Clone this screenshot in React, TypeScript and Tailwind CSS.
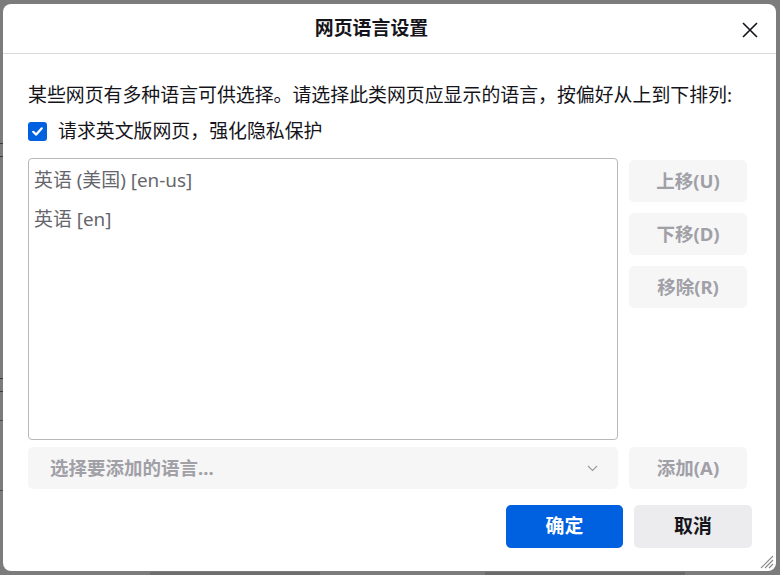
import React from "react";

const font = { fontFamily: '"Noto Sans", "Noto Sans CJK SC", sans-serif' };

function SideButton({ children, className = "" }: { children: React.ReactNode; className?: string }) {
  return (
    <div
      className={
        "flex h-[42px] w-[118px] items-center justify-center rounded-[5px] bg-[#f6f6f7] text-[18.5px] font-bold text-[#a0a0a6] " +
        className
      }
    >
      {children}
    </div>
  );
}

export default function App() {
  return (
    <div className="relative h-[575px] w-[780px] overflow-hidden bg-[#7c7c7c]" style={font}>
      {/* underlying page fragments at left edge */}
      <div className="absolute left-0 top-[420px] h-px w-[3px] bg-[#4a4a4a]" />
      <div className="absolute left-0 top-[490px] h-px w-[3px] bg-[#4a4a4a]" />
      <div className="absolute left-0 top-[143px] h-[14px] w-[3px] border-y border-[#3a3a3a]" />
      <div className="absolute left-0 top-[378px] h-[14px] w-[3px] border-y border-[#3a3a3a]" />
      <div className="absolute bottom-0 left-[150px] h-[3px] w-[170px] bg-[#6e6e6e]" />
      <div className="absolute bottom-0 left-[485px] h-[3px] w-[200px] bg-[#6a6a6a]" />

      <div className="relative ml-[3px] mt-[4px] flex h-[567px] w-[773px] flex-col rounded-[8px] bg-white">
        {/* header */}
        <div className="relative flex h-[50px] shrink-0 items-center justify-center border-b border-[#dcdcdc] pr-[36px]">
          <div className="text-[18.9px] font-bold leading-none text-[#15141a]">网页语言设置</div>
          <svg
            className="absolute right-[17px] top-[17px]"
            width="18"
            height="18"
            viewBox="0 0 18 18"
            fill="none"
            stroke="#15141a"
            strokeWidth="1.6"
          >
            <path d="M2 2 L16 16 M16 2 L2 16" />
          </svg>
        </div>

        {/* body */}
        <div className="flex flex-1 flex-col pl-[25px] pr-[24px] pt-[28px]">
          <div className="whitespace-nowrap text-[18.9px] leading-[26px] text-[#15141a]">
            某些网页有多种语言可供选择。请选择此类网页应显示的语言，按偏好从上到下排列:
          </div>

          <div className="mt-[10px] flex items-center gap-[11px]">
            <div className="flex h-[19px] w-[19px] items-center justify-center rounded-[3px] bg-[#0061e0]">
              <svg width="13" height="13" viewBox="0 0 13 13" fill="none" stroke="white" strokeWidth="2.2" strokeLinecap="round" strokeLinejoin="round">
                <path d="M2.2 6.8 L5.2 9.6 L10.8 3.3" />
              </svg>
            </div>
            <div className="text-[18.9px] leading-[26px] text-[#15141a]">请求英文版网页，强化隐私保护</div>
          </div>

          <div className="mt-[14px] flex gap-[11px]">
            <div className="h-[282px] w-[590px] rounded-[4px] border border-[#b8b8bc] px-[5px] pt-[8px]">
              <div className="text-[18.9px] leading-[26px] text-[#66666c]">英语 (美国) [en-us]</div>
              <div className="mt-[13px] text-[18.9px] leading-[26px] text-[#66666c]">英语 [en]</div>
            </div>
            <div className="flex flex-col gap-[11px] pt-[2px]">
              <SideButton>上移(U)</SideButton>
              <SideButton>下移(D)</SideButton>
              <SideButton>移除(R)</SideButton>
            </div>
          </div>

          <div className="mt-[7px] flex gap-[11px]">
            <div className="flex h-[42px] w-[590px] items-center justify-between rounded-[5px] bg-[#f6f6f7] pl-[22px] pr-[20px]">
              <div className="text-[18.5px] font-bold text-[#a0a0a6]">选择要添加的语言...</div>
              <svg width="11" height="7" viewBox="0 0 11 7" fill="none" stroke="#9a9aa0" strokeWidth="1.1">
                <path d="M1 1 L5.5 5.5 L10 1" />
              </svg>
            </div>
            <SideButton>添加(A)</SideButton>
          </div>

          <div className="mt-[16px] flex justify-end gap-[11px]">
            <div className="flex h-[43px] w-[117px] items-center justify-center rounded-[5px] bg-[#0061e0] text-[18.9px] font-bold text-white">
              确定
            </div>
            <div className="flex h-[43px] w-[118px] items-center justify-center rounded-[5px] bg-[#ececee] text-[18.9px] font-bold text-[#15141a]">
              取消
            </div>
          </div>
        </div>

        {/* resize grip */}
        <svg className="absolute bottom-[2px] right-[2px]" width="15" height="15" viewBox="0 0 15 15" fill="none" stroke="#8a8a8a" strokeWidth="1.1">
          <path d="M14 2 L2 14 M14 6 L6 14 M14 10 L10 14" />
        </svg>
      </div>
    </div>
  );
}
